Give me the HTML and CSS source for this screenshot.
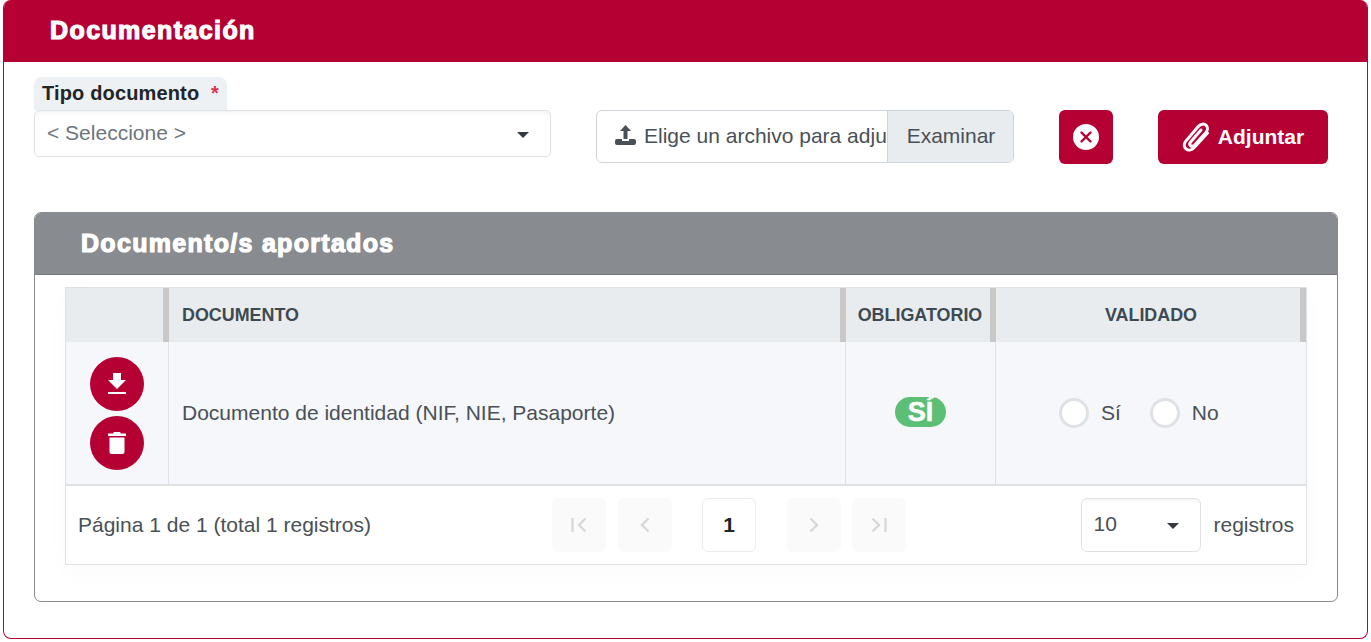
FILE: index.html
```html
<!DOCTYPE html>
<html lang="es">
<head>
<meta charset="utf-8">
<title>Documentación</title>
<link rel="stylesheet" href="styles.css">
</head>
<body>
<section class="card">
  <h1 class="card-title">Documentación</h1>
  <div class="card-body">
    <div class="form-row">
      <div class="field">
        <label class="field-label">Tipo documento <span class="req">*</span></label>
        <div class="select"><span class="placeholder">&lt; Seleccione &gt;</span><span class="caret"></span></div>
      </div>
      <div class="file">
        <div class="file-name">
          <svg class="upload-icon" viewBox="0 0 21 20" width="21" height="20"><path fill="#495057" d="M10.500 0 16 6h-3.500v8h-4V6H5z"/><path fill="#495057" d="M0 16a2 2 0 0 1 2-2h5v2h7v-2h5a2 2 0 0 1 2 2v2a2 2 0 0 1-2 2H2a2 2 0 0 1-2-2z"/></svg>
          <span class="file-text">Elige un archivo para adjuntar</span>
        </div>
        <div class="file-btn">Examinar</div>
      </div>
      <button class="btn btn-icon" type="button">
        <svg viewBox="0 0 26 26" width="26" height="26"><circle cx="13" cy="13" r="13" fill="#fff"/><path d="M8.500 8.500l9 9m0-9l-9 9" stroke="#b40033" stroke-width="2.400" stroke-linecap="round"/></svg>
      </button>
      <button class="btn btn-attach" type="button">
        <svg viewBox="0 0 28 30" width="28" height="30"><path fill="none" stroke="#fff" stroke-width="3" stroke-linecap="round" stroke-linejoin="round" d="M25.500 11 12 25.800c-2.300 2.600-5.800 3-8 1.100-2.200-1.900-2.300-5.300 0-8L16 4.700c2.500-2.800 5.900-3.400 8-1.500 2.100 1.900 1.900 5-.3 7.600L12.600 23c-1.200 1.400-2.900 1.800-4 .8-1.100-1-1-2.600.2-4L19 8"/></svg>
        <span>Adjuntar</span>
      </button>
    </div>

    <section class="panel">
      <h2 class="panel-title">Documento/s aportados</h2>
      <div class="panel-body">
        <div class="table">
          <div class="thead">
            <div class="th"></div>
            <div class="th th-left">DOCUMENTO</div>
            <div class="th th-oblig">OBLIGATORIO</div>
            <div class="th th-valid">VALIDADO</div>
          </div>
          <div class="tbody">
            <div class="td td-actions">
              <button class="round" type="button"><svg viewBox="0 0 20 22" width="20" height="22"><path fill="#fff" d="M6 0h8v7h5l-9 9-9-9h5z"/><rect x="1" y="19" width="18" height="2" fill="#fff"/></svg></button>
              <button class="round" type="button"><svg viewBox="0 0 20 24" width="20" height="24"><path fill="#fff" d="M7 1h6l1 1.500h5V5H1V2.500h5zM2.500 6.500h15V21c0 1.200-.8 2-2 2h-11c-1.200 0-2-.8-2-2z"/></svg></button>
            </div>
            <div class="td td-doc">Documento de identidad (NIF, NIE, Pasaporte)</div>
            <div class="td td-center"><span class="badge">SÍ</span></div>
            <div class="td td-radios">
              <span class="radio"></span><span class="radio-label">Sí</span>
              <span class="radio"></span><span class="radio-label">No</span>
            </div>
          </div>
          <div class="tfoot">
            <span class="page-info">Página 1 de 1 (total 1 registros)</span>
            <div class="pager">
              <span class="pg off"><svg viewBox="0 0 18 18" width="18" height="18"><path d="M2.500 2v14M15.500 2.500 9 9l6.500 6.500" class="pg-line"/></svg></span>
              <span class="pg off pg-prev"><svg viewBox="0 0 18 18" width="18" height="18"><path d="M12.500 2.500 6 9l6.500 6.500" class="pg-line"/></svg></span>
              <span class="pg current">1</span>
              <span class="pg off pg-next"><svg viewBox="0 0 18 18" width="18" height="18"><path d="M5.500 2.500 12 9l-6.500 6.500" class="pg-line"/></svg></span>
              <span class="pg off pg-last"><svg viewBox="0 0 18 18" width="18" height="18"><path d="M15.500 2v14M2.500 2.500 9 9l-6.500 6.500" class="pg-line"/></svg></span>
            </div>
            <div class="per-page">
              <div class="mini-select"><span>10</span><span class="caret"></span></div>
              <span>registros</span>
            </div>
          </div>
        </div>
      </div>
    </section>
  </div>
</section>
</body>
</html>
```
FILE: styles.css
```css
* { box-sizing: border-box; }
html, body { margin: 0; padding: 0; background: #fff; }
body {
  padding: 0 3px 3px;
  font-family: "Liberation Sans", Arial, sans-serif;
  font-size: 21px;
  color: #495057;
  height: 642px;
  overflow: hidden;
}
.card {
  height: 639px;
  border: 1px solid #b40033;
  border-top: 0;
  border-radius: 8px;
  overflow: hidden;
}
.card-title {
  margin: 0 -1px;
  height: 62px;
  background: #b40033;
  color: #fff;
  font-size: 25px;
  font-weight: 700;
  line-height: 61px;
  padding-left: 47px;
  letter-spacing: 1.4px;
  -webkit-text-stroke: 1.2px #fff;
}
.card-body { padding: 15px 30px 0; }
.form-row { display: flex; align-items: flex-start; height: 135px; }
.field { width: 517px; margin-right: 45px; }
.field-label {
  display: block;
  width: 193px;
  height: 33px;
  background: #eef1f4;
  border-radius: 8px 8px 0 0;
  color: #212529;
  font-size: 20px;
  font-weight: 700;
  letter-spacing: .15px;
  line-height: 32px;
  padding-left: 8px;
  white-space: pre;
}
.req { color: #dc3545; font-weight: 700; margin-left: 6px; }
.select {
  height: 47px;
  border: 1px solid #dee2e6;
  border-radius: 5px;
  box-shadow: inset 0 6px 6px -6px rgba(0,0,0,.1);
  display: flex;
  align-items: center;
  justify-content: space-between;
  padding: 0 21px 2px 12px;
}
.placeholder { color: #6c757d; }
.caret {
  width: 0; height: 0;
  border-left: 6px solid transparent;
  border-right: 6px solid transparent;
  border-top: 6px solid #343a40;
  margin-top: 4px;
}
.file {
  width: 418px;
  height: 53px;
  margin-top: 33px;
  margin-right: 45px;
  border: 1px solid #ced4da;
  border-radius: 6px;
  display: flex;
  overflow: hidden;
}
.file-name {
  width: 290px;
  flex: none;
  display: flex;
  align-items: center;
  padding-left: 18px;
  white-space: nowrap;
}
.upload-icon { flex: none; margin-right: 8px; margin-top: -3px; }
.file-text {
  flex: 1;
  min-width: 0;
  overflow: hidden;
  padding-bottom: 2px;
}
.file-btn {
  flex: 1;
  background: #e9ecef;
  border-left: 1px solid #ced4da;
  padding-left: 1px;
  text-align: center;
  line-height: 49px;
}
.btn {
  height: 54px;
  margin-top: 33px;
  background: #b40033;
  border: 0;
  border-radius: 6px;
  color: #fff;
  display: flex;
  align-items: center;
  justify-content: center;
  padding: 0;
  font: 700 21px "Liberation Sans", Arial, sans-serif;
}
.btn-icon { width: 54px; margin-right: 45px; }
.btn-attach { width: 170px; gap: 8px; }
.panel {
  width: 1304px;
  height: 390px;
  border: 1px solid #868a8e;
  border-radius: 7px;
  overflow: hidden;
}
.panel-title {
  margin: -1px -1px 0;
  height: 63px;
  background: #888b8f;
  border-bottom: 1px solid #75787c;
  color: #fff;
  font-size: 25px;
  font-weight: 700;
  line-height: 63px;
  padding-left: 47px;
  letter-spacing: 1.3px;
  -webkit-text-stroke: 1.2px #fff;
}
.panel-body { padding: 12px 30px 0; }
.table {
  width: 1242px;
  height: 278px;
  border: 1px solid #dee2e6;
  box-shadow: 0 8px 24px rgba(0,0,0,.02);
}
.thead, .tbody {
  display: grid;
  grid-template-columns: 103px 677px 150px 1fr;
}
.thead { height: 54px; background: #e9ecef; }
.th {
  border-right: 6px solid #c8c8c8;
  color: #3d4a52;
  font-size: 17.9px;
  font-weight: 700;
  line-height: 54px;
  text-align: center;
  white-space: nowrap;
}
.th-left { text-align: left; padding-left: 13px; }
.th-oblig { padding-left: 4px; }
.th-valid { padding-left: 6px; }
.tbody { height: 144px; background: #f5f7fb; border-bottom: 2px solid #dee2e6; }
.td {
  border-right: 1px solid #dee2e6;
  display: flex;
  align-items: center;
}
.td:last-child { border-right: 0; }
.td-actions { flex-direction: column; justify-content: center; gap: 5px; }
.round {
  width: 54px;
  height: 54px;
  border: 0;
  border-radius: 50%;
  background: #b40033;
  padding: 0;
  display: flex;
  align-items: center;
  justify-content: center;
}
.td-doc { padding-left: 13px; }
.td-center { justify-content: center; }
.badge {
  width: 51px;
  height: 30px;
  border-radius: 15px;
  background: #5cbf75;
  color: #fff;
  font-size: 27px;
  font-weight: 700;
  line-height: 30px;
  text-align: center;
  margin-top: -3px;
  -webkit-text-stroke: .5px #fff;
}
.td-radios { padding-left: 63px; }
.radio {
  width: 30px;
  height: 30px;
  border: 3px solid #dee2e6;
  border-radius: 50%;
  background: #fff;
}
.radio-label { margin-left: 12px; }
.radio-label:nth-of-type(2) { margin-right: 29px; }
.tfoot {
  height: 79px;
  display: grid;
  grid-template-columns: 474px 354px 1fr;
  align-items: center;
  padding: 0 12px 2px;
}
.pager { display: flex; }
.pg {
  flex: none;
  width: 54px;
  height: 54px;
  border-radius: 6px;
  display: flex;
  align-items: center;
  justify-content: center;
  margin-right: 12px;
}
.off { background: #fafafa; }
.pg-prev { margin-right: 30px; }
.pg-next { margin-right: 11px; }
.pg-last { margin-right: 0; }
.current {
  border: 1px solid #e9ecef;
  color: #212529;
  font-weight: 700;
  margin-right: 31px;
}
.pg-line { fill: none; stroke: #d8d8d8; stroke-width: 2.400; }
.per-page {
  display: flex;
  align-items: center;
  justify-content: flex-end;
  gap: 12px;
}
.mini-select {
  width: 120px;
  height: 54px;
  border: 1px solid #dee2e6;
  border-radius: 6px;
  box-shadow: inset 0 6px 6px -6px rgba(0,0,0,.08);
  display: flex;
  align-items: center;
  justify-content: space-between;
  padding: 0 21px 2px 11px;
}
```
